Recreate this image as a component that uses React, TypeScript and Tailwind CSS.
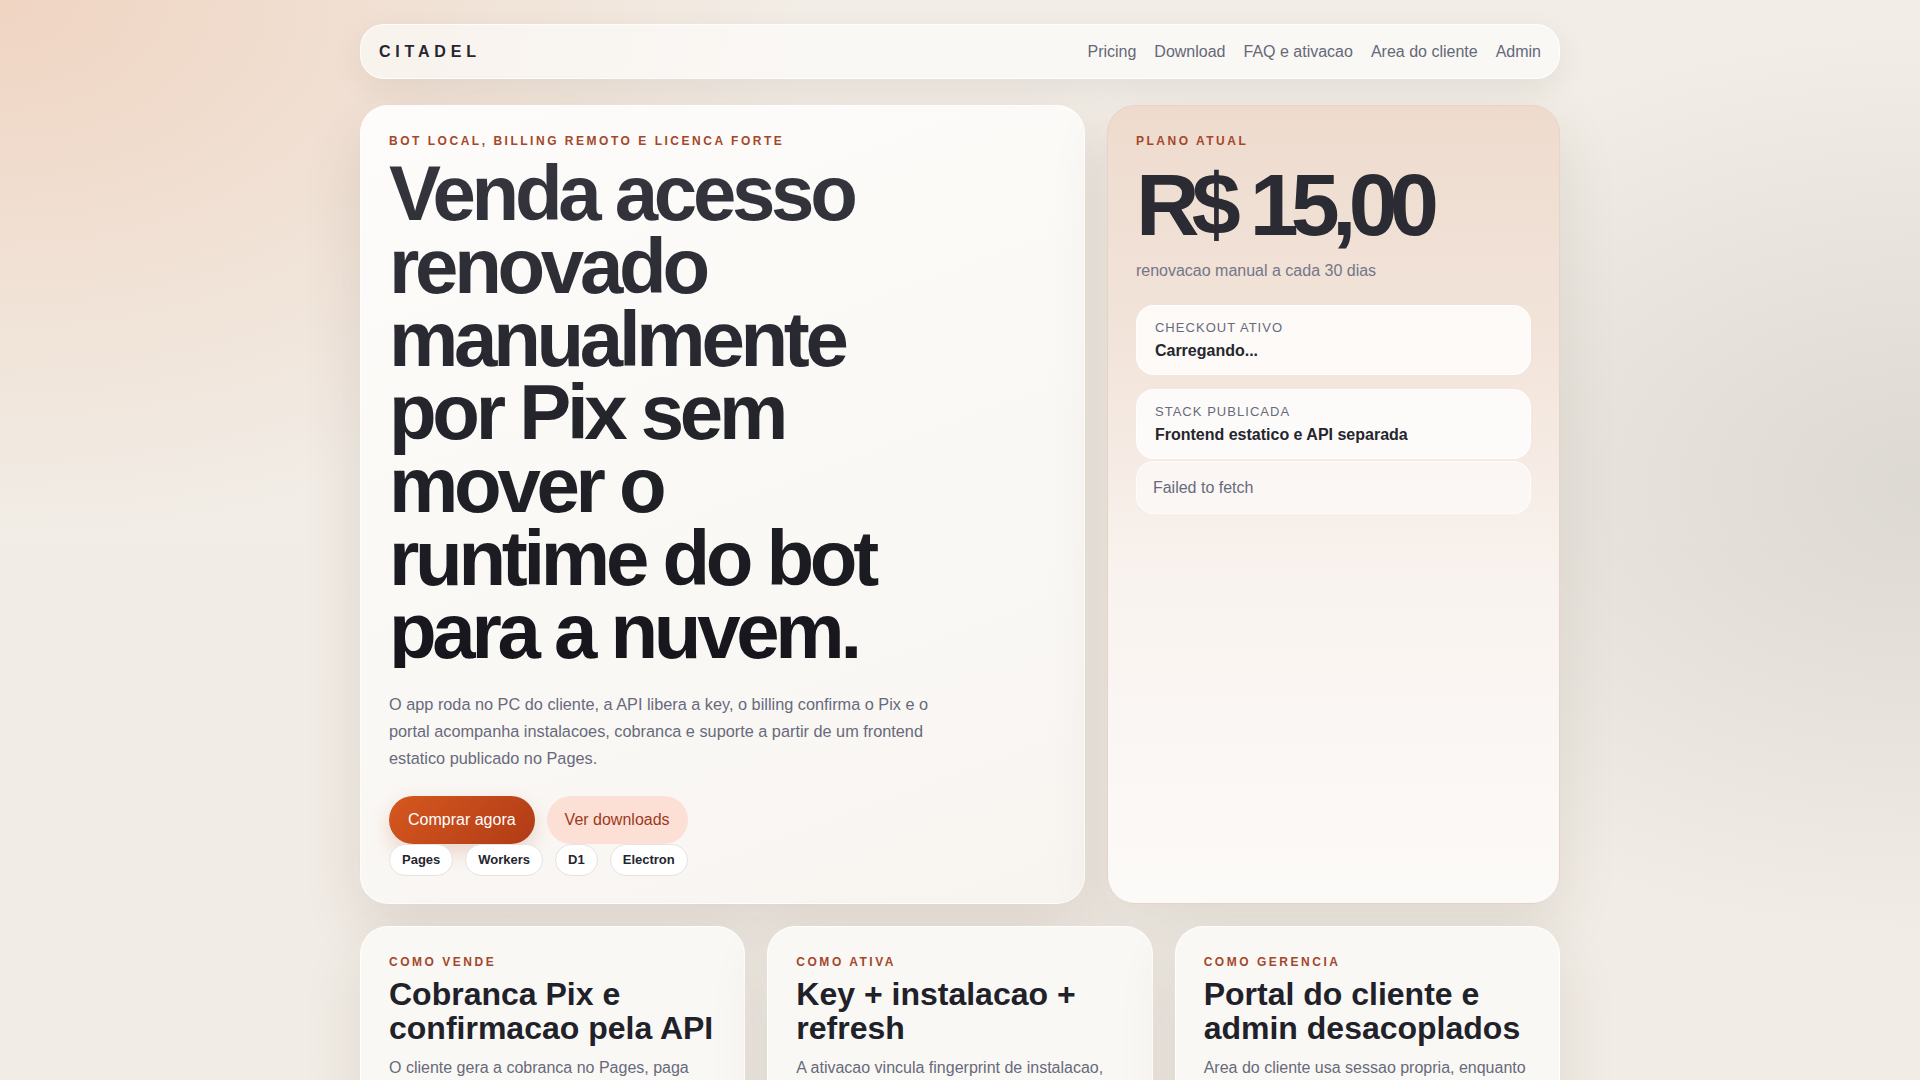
export default function App() {
  const links = ["Pricing", "Download", "FAQ e ativacao", "Area do cliente", "Admin"];
  const pills = ["Pages", "Workers", "D1", "Electron"];
  const cards = [
    {
      eyebrow: "Como vende",
      title: "Cobranca Pix e confirmacao pela API",
      text: "O cliente gera a cobranca no Pages, paga pelo app do banco e a API confirma o pagamento antes de liberar a key.",
    },
    {
      eyebrow: "Como ativa",
      title: "Key + instalacao + refresh",
      text: "A ativacao vincula fingerprint de instalacao, emite token curto e renova a licenca em segundo plano.",
    },
    {
      eyebrow: "Como gerencia",
      title: "Portal do cliente e admin desacoplados",
      text: "Area do cliente usa sessao propria, enquanto o admin controla planos, keys e instalacoes.",
    },
  ];

  return (
    <div className="h-screen overflow-hidden bg-[radial-gradient(ellipse_60%_70%_at_0%_0%,rgba(238,196,170,0.6),transparent_70%),radial-gradient(ellipse_50%_60%_at_100%_45%,rgba(214,210,204,0.75),transparent_70%),linear-gradient(180deg,#f2ede6,#f1ece5)] font-['Liberation_Sans',Arial,sans-serif] text-[#23252e]">
      <div className="mx-auto max-w-[1200px] pt-[24px]">
        <nav className="flex h-[55px] items-center justify-between rounded-[24px] border border-white/80 bg-white/60 px-[18px] shadow-[0_10px_30px_rgba(70,50,40,0.08)]">
          <span className="text-[16px] font-bold tracking-[0.3em] text-[#25262e]">CITADEL</span>
          <div className="flex gap-[18px] text-[16px] text-[#646878]">
            {links.map((l) => (
              <span key={l}>{l}</span>
            ))}
          </div>
        </nav>

        <main className="mt-[26px] grid grid-cols-[1.6fr_1fr] gap-[22px]">
          <section className="rounded-[28px] border border-white/80 bg-[linear-gradient(160deg,#fdfcfa,#f8f5f1)] px-[28px] pb-[27px] pt-[28px] shadow-[0_24px_60px_rgba(70,45,30,0.12)]">
            <p className="text-[12px] font-bold uppercase leading-[14px] tracking-[0.21em] text-[#a4472b]">
              Bot local, billing remoto e licenca forte
            </p>
            <h1 className="mt-[9px] max-w-[510px] bg-gradient-to-b from-[#35363e] to-[#15151b] bg-clip-text text-[78px] font-bold leading-[73px] tracking-[-0.055em] text-transparent">
              Venda acesso renovado manualmente por Pix sem mover o runtime do bot para a nuvem.
            </h1>
            <p className="mt-[23px] max-w-[565px] text-[16.3px] leading-[27px] text-[#676a7c]">
              O app roda no PC do cliente, a API libera a key, o billing confirma o Pix e o portal acompanha instalacoes, cobranca e suporte a partir de um frontend estatico publicado no Pages.
            </p>
            <div className="mt-[24px] flex gap-[12px]">
              <button className="h-[48px] rounded-full bg-[linear-gradient(135deg,#d6581f,#b03b16)] px-[19px] text-[16px] text-white shadow-[0_8px_20px_rgba(180,70,30,0.2)]">
                Comprar agora
              </button>
              <button className="h-[48px] rounded-full bg-[#fde0d5] px-[18px] text-[16px] text-[#9c3a1c]">
                Ver downloads
              </button>
            </div>
            <div className="flex gap-[12px]">
              {pills.map((p) => (
                <span
                  key={p}
                  className="flex h-[32px] items-center rounded-full border border-[#e6e3e0] bg-white px-[12px] text-[13px] font-bold text-[#25262e]"
                >
                  {p}
                </span>
              ))}
            </div>
          </section>

          <aside className="rounded-[28px] border border-[#e6d4c8] bg-[linear-gradient(180deg,#eedbce_0%,#f2e4da_30%,#f9f3ef_60%,#fcfaf8_100%)] px-[28px] pt-[28px] shadow-[0_24px_60px_rgba(70,45,30,0.10)]">
            <p className="text-[12px] font-bold uppercase leading-[14px] tracking-[0.21em] text-[#a4472b]">Plano atual</p>
            <p className="mt-[13px] text-[88px] font-bold leading-[88px] tracking-[-0.088em] text-[#2a2b33]">R$ 15,00</p>
            <p className="mt-[10px] text-[16px] leading-[24px] text-[#737688]">renovacao manual a cada 30 dias</p>
            <div className="mt-[22px] flex flex-col gap-[14px]">
              <div className="rounded-[18px] border border-white/80 bg-white/80 px-[18px] py-[13px]">
                <p className="text-[13px] uppercase leading-[17px] tracking-[0.08em] text-[#676a7c]">Checkout ativo</p>
                <p className="mt-[5px] text-[16px] font-bold leading-[20px] text-[#25262e]">Carregando...</p>
              </div>
              <div className="rounded-[18px] border border-white/80 bg-white/80 px-[18px] py-[13px]">
                <p className="text-[13px] uppercase leading-[17px] tracking-[0.08em] text-[#676a7c]">Stack publicada</p>
                <p className="mt-[5px] text-[16px] font-bold leading-[20px] text-[#25262e]">Frontend estatico e API separada</p>
              </div>
            </div>
            <div className="mt-[2px] flex h-[53px] items-center rounded-[18px] border border-white/70 bg-white/55 px-[16px] text-[16px] text-[#676a7c]">
              Failed to fetch
            </div>
          </aside>
        </main>

        <section className="mt-[22px] grid grid-cols-3 gap-[22px]">
          {cards.map((c) => (
            <div
              key={c.eyebrow}
              className="rounded-[28px] border border-white/80 bg-[#faf8f5] p-[28px] shadow-[0_24px_60px_rgba(70,45,30,0.10)]"
            >
              <p className="text-[12px] font-bold uppercase leading-[14px] tracking-[0.21em] text-[#a4472b]">{c.eyebrow}</p>
              <h3 className="mt-[8px] text-[32px] font-bold leading-[34px] text-[#202129]">{c.title}</h3>
              <p className="mt-[10px] text-[16px] leading-[26px] text-[#676a7c]">{c.text}</p>
            </div>
          ))}
        </section>
      </div>
    </div>
  );
}
